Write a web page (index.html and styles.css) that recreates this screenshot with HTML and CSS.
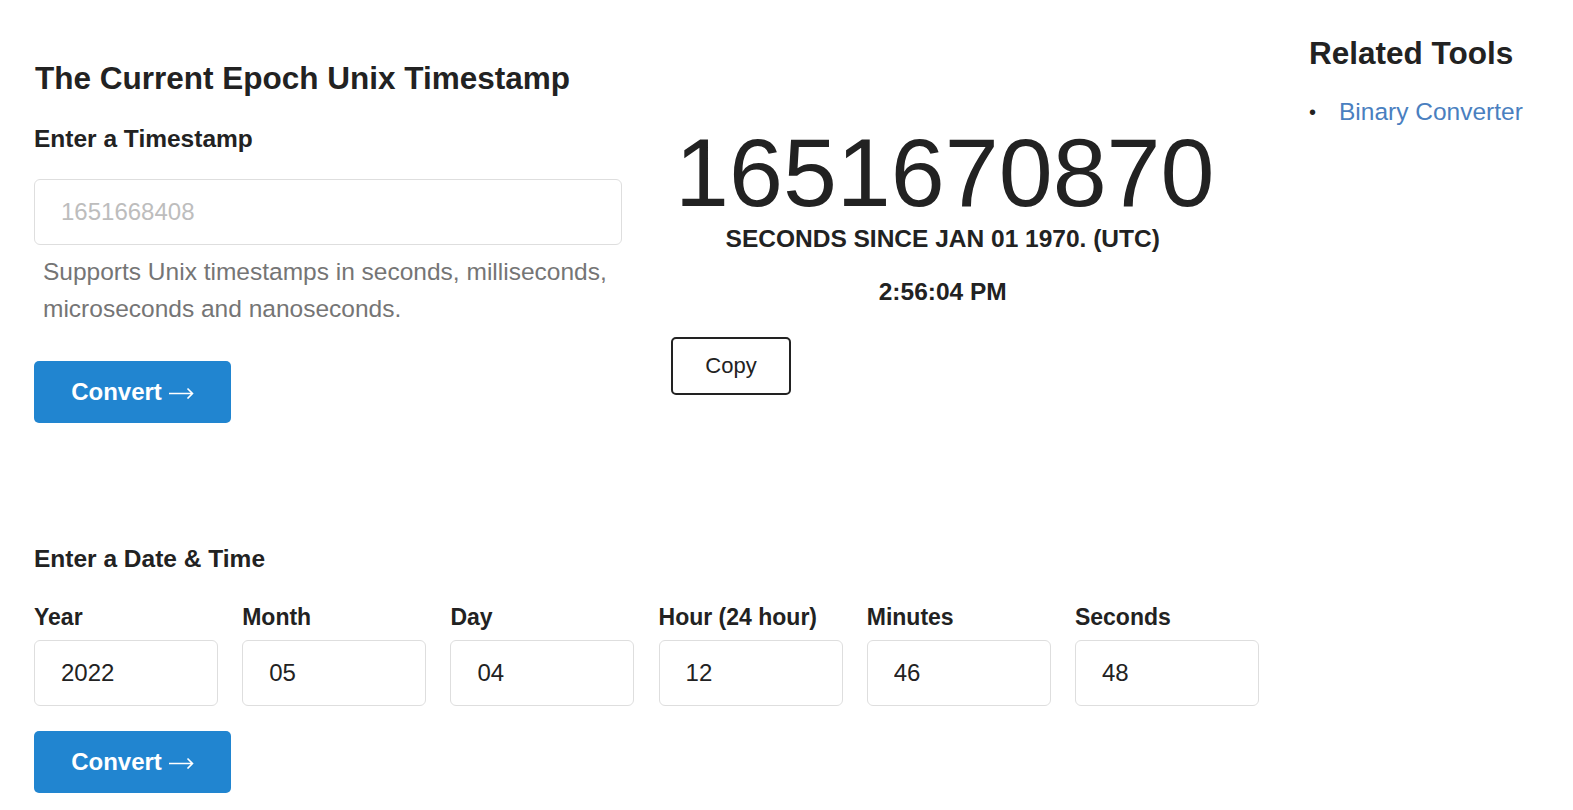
FILE: index.html
```html
<!DOCTYPE html>
<html lang="en">
<head>
  <meta charset="UTF-8">
  <meta name="viewport" content="width=device-width, initial-scale=1.0">
  <title>Epoch Unix Timestamp Converter</title>
  <link rel="stylesheet" href="styles.css">
</head>
<body>
  <div class="page">
    <div class="main">
      <div class="top">
        <div class="converter">
          <h1>The Current Epoch Unix Timestamp</h1>
          <h2>Enter a Timestamp</h2>
          <input type="text" class="field wide" placeholder="1651668408">
          <p class="hint">Supports Unix timestamps in seconds, milliseconds, microseconds and nanoseconds.</p>
          <button class="convert">Convert <svg class="arrow" width="25" height="12" viewBox="0 0 25 12"><path d="M0 6.5H23.5M18.5 1.5L23.5 6.5L18.5 11.5" fill="none" stroke="currentColor" stroke-width="1.6"/></svg></button>
        </div>
        <div class="clock">
          <div class="clock-box">
            <div class="epoch">1651670870</div>
            <div class="since">SECONDS SINCE JAN 01 1970. (UTC)</div>
            <div class="local">2:56:04 PM</div>
          </div>
          <button class="copy">Copy</button>
        </div>
      </div>

      <div class="datetime">
        <h2>Enter a Date &amp; Time</h2>
        <div class="date-grid">
          <label class="cell"><span>Year</span><input type="text" class="field" value="2022"></label>
          <label class="cell"><span>Month</span><input type="text" class="field" value="05"></label>
          <label class="cell"><span>Day</span><input type="text" class="field" value="04"></label>
          <label class="cell"><span>Hour (24 hour)</span><input type="text" class="field" value="12"></label>
          <label class="cell"><span>Minutes</span><input type="text" class="field" value="46"></label>
          <label class="cell"><span>Seconds</span><input type="text" class="field" value="48"></label>
        </div>
        <button class="convert">Convert <svg class="arrow" width="25" height="12" viewBox="0 0 25 12"><path d="M0 6.5H23.5M18.5 1.5L23.5 6.5L18.5 11.5" fill="none" stroke="currentColor" stroke-width="1.6"/></svg></button>
      </div>
    </div>

    <div class="side">
      <h3>Related Tools</h3>
      <ul>
        <li><a href="#">Binary Converter</a></li>
      </ul>
    </div>
  </div>
</body>
</html>
```

FILE: styles.css
```css
body { margin: 0; background: #fff; color: #222; font-family: "Liberation Sans", Arial, sans-serif; }
.page { display: flex; gap: 50px; padding: 0 34px; }
.main { width: 1225px; flex: none; }
.top { display: grid; grid-template-columns: 588px 1fr; gap: 49px; height: 423px; }

h1 { font-size: 31.5px; line-height: 37px; margin: 60px 0 0 1px; font-weight: bold; }
h2 { font-size: 24.5px; line-height: 29px; margin: 27px 0 0; font-weight: bold; }

.field { box-sizing: border-box; display: block; width: 100%; height: 66px; border: 1px solid #dedede; border-radius: 6px; padding: 0 26px; font: 24px "Liberation Sans", Arial, sans-serif; color: #222; background: #fff; outline: none; }
.field::placeholder { color: #bdbdbd; }
.wide { margin-top: 26px; }

.hint { margin: 8px 0 0; padding-left: 9px; font-size: 24.5px; line-height: 37px; color: #757575; }

.convert { display: flex; align-items: center; justify-content: center; gap: 7px; width: 197px; height: 62px; margin-top: 34px; border: none; border-radius: 5px; background: #2185d0; color: #fff; font: bold 24px "Liberation Sans", Arial, sans-serif; cursor: pointer; }
.arrow { margin-top: 2px; }

.clock { padding-top: 124px; }
.clock-box { display: inline-block; text-align: center; }
.epoch { font-size: 97px; line-height: 97px; text-align: left; margin-left: 4px; }
.since { font-size: 24.5px; font-weight: bold; line-height: 28px; margin-top: 4px; }
.local { font-size: 24.5px; font-weight: bold; line-height: 28px; margin-top: 25px; }
.copy { display: block; width: 120px; height: 58px; margin-top: 31px; border: 2px solid #222; border-radius: 5px; background: #fff; color: #222; font: 22px "Liberation Sans", Arial, sans-serif; cursor: pointer; }

.datetime { padding-top: 121px; }
.datetime h2 { margin: 0; }
.date-grid { display: grid; grid-template-columns: repeat(6, 184px); justify-content: space-between; margin-top: 31px; }
.cell span { display: block; font-size: 23px; font-weight: bold; line-height: 27px; margin-bottom: 9px; }
.datetime .convert { margin-top: 25px; }

.side { padding-top: 35px; }
.side h3 { font-size: 31.5px; line-height: 36px; margin: 0; font-weight: bold; }
.side ul { list-style: none; margin: 26px 0 0; padding: 0; font-size: 24.5px; line-height: 30px; }
.side li { display: flex; }
.side li::before { content: "\2022"; width: 30px; flex: none; color: #222; font-size: 20px; }
.side a { color: #4a7fc0; text-decoration: none; }
```
